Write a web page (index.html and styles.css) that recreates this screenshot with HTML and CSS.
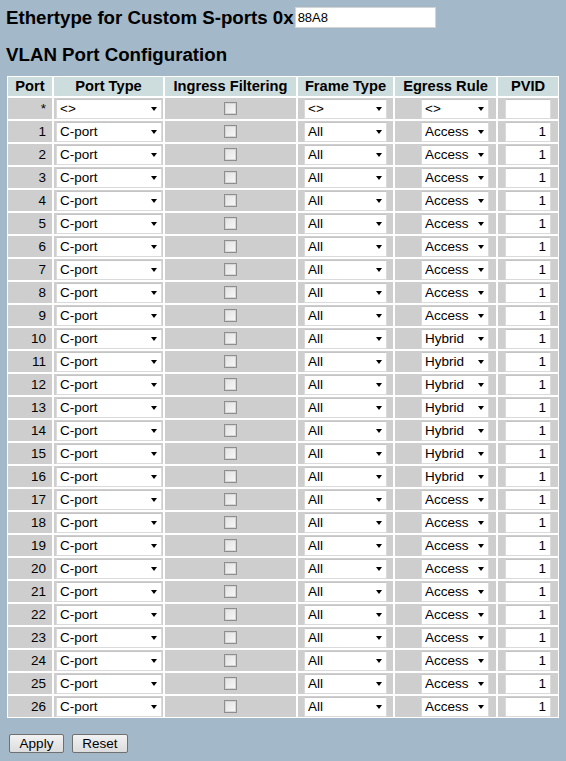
FILE: index.html
```html
<!DOCTYPE html>
<html>
<head>
<meta charset="utf-8">
<title>VLAN Port Configuration</title>
<link rel="stylesheet" href="styles.css">
</head>
<body>
<div class="ethertype">
  <h1 class="title">Ethertype for Custom S-ports 0x</h1>
  <input class="etype" type="text" value="88A8">
</div>
<h2 class="title title2">VLAN Port Configuration</h2>
<table class="config">
  <colgroup>
    <col class="c-port"><col class="c-type"><col class="c-ingress"><col class="c-frame"><col class="c-egress"><col class="c-pvid">
  </colgroup>
  <thead>
    <tr><th>Port</th><th>Port Type</th><th>Ingress Filtering</th><th>Frame Type</th><th>Egress Rule</th><th>PVID</th></tr>
  </thead>
  <tbody>
    <tr><td class="num">*</td><td class="t-type"><span class="sel w-type"><select><option>&lt;&gt;</option></select></span></td><td class="t-ing"><input type="checkbox" class="chk"></td><td class="t-frame"><span class="sel w-frame"><select><option>&lt;&gt;</option></select></span></td><td class="t-egress"><span class="sel w-egress"><select><option>&lt;&gt;</option></select></span></td><td class="t-pvid"><input class="pvid" type="text" value=""></td></tr>
    <tr><td class="num">1</td><td class="t-type"><span class="sel w-type"><select><option>C-port</option></select></span></td><td class="t-ing"><input type="checkbox" class="chk"></td><td class="t-frame"><span class="sel w-frame"><select><option>All</option></select></span></td><td class="t-egress"><span class="sel w-egress"><select><option>Access</option></select></span></td><td class="t-pvid"><input class="pvid" type="text" value="1"></td></tr>
    <tr><td class="num">2</td><td class="t-type"><span class="sel w-type"><select><option>C-port</option></select></span></td><td class="t-ing"><input type="checkbox" class="chk"></td><td class="t-frame"><span class="sel w-frame"><select><option>All</option></select></span></td><td class="t-egress"><span class="sel w-egress"><select><option>Access</option></select></span></td><td class="t-pvid"><input class="pvid" type="text" value="1"></td></tr>
    <tr><td class="num">3</td><td class="t-type"><span class="sel w-type"><select><option>C-port</option></select></span></td><td class="t-ing"><input type="checkbox" class="chk"></td><td class="t-frame"><span class="sel w-frame"><select><option>All</option></select></span></td><td class="t-egress"><span class="sel w-egress"><select><option>Access</option></select></span></td><td class="t-pvid"><input class="pvid" type="text" value="1"></td></tr>
    <tr><td class="num">4</td><td class="t-type"><span class="sel w-type"><select><option>C-port</option></select></span></td><td class="t-ing"><input type="checkbox" class="chk"></td><td class="t-frame"><span class="sel w-frame"><select><option>All</option></select></span></td><td class="t-egress"><span class="sel w-egress"><select><option>Access</option></select></span></td><td class="t-pvid"><input class="pvid" type="text" value="1"></td></tr>
    <tr><td class="num">5</td><td class="t-type"><span class="sel w-type"><select><option>C-port</option></select></span></td><td class="t-ing"><input type="checkbox" class="chk"></td><td class="t-frame"><span class="sel w-frame"><select><option>All</option></select></span></td><td class="t-egress"><span class="sel w-egress"><select><option>Access</option></select></span></td><td class="t-pvid"><input class="pvid" type="text" value="1"></td></tr>
    <tr><td class="num">6</td><td class="t-type"><span class="sel w-type"><select><option>C-port</option></select></span></td><td class="t-ing"><input type="checkbox" class="chk"></td><td class="t-frame"><span class="sel w-frame"><select><option>All</option></select></span></td><td class="t-egress"><span class="sel w-egress"><select><option>Access</option></select></span></td><td class="t-pvid"><input class="pvid" type="text" value="1"></td></tr>
    <tr><td class="num">7</td><td class="t-type"><span class="sel w-type"><select><option>C-port</option></select></span></td><td class="t-ing"><input type="checkbox" class="chk"></td><td class="t-frame"><span class="sel w-frame"><select><option>All</option></select></span></td><td class="t-egress"><span class="sel w-egress"><select><option>Access</option></select></span></td><td class="t-pvid"><input class="pvid" type="text" value="1"></td></tr>
    <tr><td class="num">8</td><td class="t-type"><span class="sel w-type"><select><option>C-port</option></select></span></td><td class="t-ing"><input type="checkbox" class="chk"></td><td class="t-frame"><span class="sel w-frame"><select><option>All</option></select></span></td><td class="t-egress"><span class="sel w-egress"><select><option>Access</option></select></span></td><td class="t-pvid"><input class="pvid" type="text" value="1"></td></tr>
    <tr><td class="num">9</td><td class="t-type"><span class="sel w-type"><select><option>C-port</option></select></span></td><td class="t-ing"><input type="checkbox" class="chk"></td><td class="t-frame"><span class="sel w-frame"><select><option>All</option></select></span></td><td class="t-egress"><span class="sel w-egress"><select><option>Access</option></select></span></td><td class="t-pvid"><input class="pvid" type="text" value="1"></td></tr>
    <tr><td class="num">10</td><td class="t-type"><span class="sel w-type"><select><option>C-port</option></select></span></td><td class="t-ing"><input type="checkbox" class="chk"></td><td class="t-frame"><span class="sel w-frame"><select><option>All</option></select></span></td><td class="t-egress"><span class="sel w-egress"><select><option>Hybrid</option></select></span></td><td class="t-pvid"><input class="pvid" type="text" value="1"></td></tr>
    <tr><td class="num">11</td><td class="t-type"><span class="sel w-type"><select><option>C-port</option></select></span></td><td class="t-ing"><input type="checkbox" class="chk"></td><td class="t-frame"><span class="sel w-frame"><select><option>All</option></select></span></td><td class="t-egress"><span class="sel w-egress"><select><option>Hybrid</option></select></span></td><td class="t-pvid"><input class="pvid" type="text" value="1"></td></tr>
    <tr><td class="num">12</td><td class="t-type"><span class="sel w-type"><select><option>C-port</option></select></span></td><td class="t-ing"><input type="checkbox" class="chk"></td><td class="t-frame"><span class="sel w-frame"><select><option>All</option></select></span></td><td class="t-egress"><span class="sel w-egress"><select><option>Hybrid</option></select></span></td><td class="t-pvid"><input class="pvid" type="text" value="1"></td></tr>
    <tr><td class="num">13</td><td class="t-type"><span class="sel w-type"><select><option>C-port</option></select></span></td><td class="t-ing"><input type="checkbox" class="chk"></td><td class="t-frame"><span class="sel w-frame"><select><option>All</option></select></span></td><td class="t-egress"><span class="sel w-egress"><select><option>Hybrid</option></select></span></td><td class="t-pvid"><input class="pvid" type="text" value="1"></td></tr>
    <tr><td class="num">14</td><td class="t-type"><span class="sel w-type"><select><option>C-port</option></select></span></td><td class="t-ing"><input type="checkbox" class="chk"></td><td class="t-frame"><span class="sel w-frame"><select><option>All</option></select></span></td><td class="t-egress"><span class="sel w-egress"><select><option>Hybrid</option></select></span></td><td class="t-pvid"><input class="pvid" type="text" value="1"></td></tr>
    <tr><td class="num">15</td><td class="t-type"><span class="sel w-type"><select><option>C-port</option></select></span></td><td class="t-ing"><input type="checkbox" class="chk"></td><td class="t-frame"><span class="sel w-frame"><select><option>All</option></select></span></td><td class="t-egress"><span class="sel w-egress"><select><option>Hybrid</option></select></span></td><td class="t-pvid"><input class="pvid" type="text" value="1"></td></tr>
    <tr><td class="num">16</td><td class="t-type"><span class="sel w-type"><select><option>C-port</option></select></span></td><td class="t-ing"><input type="checkbox" class="chk"></td><td class="t-frame"><span class="sel w-frame"><select><option>All</option></select></span></td><td class="t-egress"><span class="sel w-egress"><select><option>Hybrid</option></select></span></td><td class="t-pvid"><input class="pvid" type="text" value="1"></td></tr>
    <tr><td class="num">17</td><td class="t-type"><span class="sel w-type"><select><option>C-port</option></select></span></td><td class="t-ing"><input type="checkbox" class="chk"></td><td class="t-frame"><span class="sel w-frame"><select><option>All</option></select></span></td><td class="t-egress"><span class="sel w-egress"><select><option>Access</option></select></span></td><td class="t-pvid"><input class="pvid" type="text" value="1"></td></tr>
    <tr><td class="num">18</td><td class="t-type"><span class="sel w-type"><select><option>C-port</option></select></span></td><td class="t-ing"><input type="checkbox" class="chk"></td><td class="t-frame"><span class="sel w-frame"><select><option>All</option></select></span></td><td class="t-egress"><span class="sel w-egress"><select><option>Access</option></select></span></td><td class="t-pvid"><input class="pvid" type="text" value="1"></td></tr>
    <tr><td class="num">19</td><td class="t-type"><span class="sel w-type"><select><option>C-port</option></select></span></td><td class="t-ing"><input type="checkbox" class="chk"></td><td class="t-frame"><span class="sel w-frame"><select><option>All</option></select></span></td><td class="t-egress"><span class="sel w-egress"><select><option>Access</option></select></span></td><td class="t-pvid"><input class="pvid" type="text" value="1"></td></tr>
    <tr><td class="num">20</td><td class="t-type"><span class="sel w-type"><select><option>C-port</option></select></span></td><td class="t-ing"><input type="checkbox" class="chk"></td><td class="t-frame"><span class="sel w-frame"><select><option>All</option></select></span></td><td class="t-egress"><span class="sel w-egress"><select><option>Access</option></select></span></td><td class="t-pvid"><input class="pvid" type="text" value="1"></td></tr>
    <tr><td class="num">21</td><td class="t-type"><span class="sel w-type"><select><option>C-port</option></select></span></td><td class="t-ing"><input type="checkbox" class="chk"></td><td class="t-frame"><span class="sel w-frame"><select><option>All</option></select></span></td><td class="t-egress"><span class="sel w-egress"><select><option>Access</option></select></span></td><td class="t-pvid"><input class="pvid" type="text" value="1"></td></tr>
    <tr><td class="num">22</td><td class="t-type"><span class="sel w-type"><select><option>C-port</option></select></span></td><td class="t-ing"><input type="checkbox" class="chk"></td><td class="t-frame"><span class="sel w-frame"><select><option>All</option></select></span></td><td class="t-egress"><span class="sel w-egress"><select><option>Access</option></select></span></td><td class="t-pvid"><input class="pvid" type="text" value="1"></td></tr>
    <tr><td class="num">23</td><td class="t-type"><span class="sel w-type"><select><option>C-port</option></select></span></td><td class="t-ing"><input type="checkbox" class="chk"></td><td class="t-frame"><span class="sel w-frame"><select><option>All</option></select></span></td><td class="t-egress"><span class="sel w-egress"><select><option>Access</option></select></span></td><td class="t-pvid"><input class="pvid" type="text" value="1"></td></tr>
    <tr><td class="num">24</td><td class="t-type"><span class="sel w-type"><select><option>C-port</option></select></span></td><td class="t-ing"><input type="checkbox" class="chk"></td><td class="t-frame"><span class="sel w-frame"><select><option>All</option></select></span></td><td class="t-egress"><span class="sel w-egress"><select><option>Access</option></select></span></td><td class="t-pvid"><input class="pvid" type="text" value="1"></td></tr>
    <tr><td class="num">25</td><td class="t-type"><span class="sel w-type"><select><option>C-port</option></select></span></td><td class="t-ing"><input type="checkbox" class="chk"></td><td class="t-frame"><span class="sel w-frame"><select><option>All</option></select></span></td><td class="t-egress"><span class="sel w-egress"><select><option>Access</option></select></span></td><td class="t-pvid"><input class="pvid" type="text" value="1"></td></tr>
    <tr><td class="num">26</td><td class="t-type"><span class="sel w-type"><select><option>C-port</option></select></span></td><td class="t-ing"><input type="checkbox" class="chk"></td><td class="t-frame"><span class="sel w-frame"><select><option>All</option></select></span></td><td class="t-egress"><span class="sel w-egress"><select><option>Access</option></select></span></td><td class="t-pvid"><input class="pvid" type="text" value="1"></td></tr>
  </tbody>
</table>
<div class="buttons">
  <button class="btn btn-apply" type="button">Apply</button>
  <button class="btn btn-reset" type="button">Reset</button>
</div>
</body>
</html>
```
FILE: styles.css
```css
html, body {
  margin: 0;
  padding: 0;
}
body {
  background: #a3b8c8;
  font-family: "Liberation Sans", Arial, sans-serif;
  font-size: 13px;
  color: #000;
  padding: 7px 7px 0 7px;
}
.ethertype {
  display: flex;
  align-items: center;
  height: 21px;
}
.title {
  font-size: 18.7px;
  font-weight: bold;
  margin: 0 0 0 -1px;
  line-height: 21px;
}
.etype {
  margin-left: 1px;
  width: 141px;
  height: 21px;
  box-sizing: border-box;
  border: 1px solid #d4d4d4;
  background: #fff;
  font-family: "Liberation Sans", Arial, sans-serif;
  font-size: 13px;
  padding: 0 2px;
  color: #000;
  outline: none;
}
.title2 {
  margin: 16px 0 11px -1px;
}
.config {
  border-collapse: separate;
  border-spacing: 0;
  table-layout: fixed;
  width: 552px;
}
.c-port { width: 46px; }
.c-type { width: 111px; }
.c-ingress { width: 133px; }
.c-frame { width: 97px; }
.c-egress { width: 103px; }
.c-pvid { width: 62px; }
.config th,
.config td {
  border: 1px solid #fff;
  padding: 0;
  box-sizing: border-box;
  white-space: nowrap;
}
.config th {
  background: #cddcdc;
  font-size: 14.67px;
  font-weight: bold;
  height: 21px;
  line-height: 19px;
  text-align: center;
}
.config td {
  background: #cecece;
  height: 23px;
  line-height: 19px;
  vertical-align: middle;
}
.num {
  text-align: right;
  padding-right: 6px !important;
  font-size: 13.5px;
}
.t-type { padding-left: 2px !important; }
.t-frame { padding-left: 6px !important; }
.t-egress { padding-right: 7px !important; }
.t-pvid { padding-left: 7px !important; }

.sel {
  position: relative;
  display: block;
  height: 20px;
}
.t-egress .sel {
  margin-left: auto;
}
.sel select {
  display: block;
  -webkit-appearance: none;
  appearance: none;
  height: 20px;
  box-sizing: border-box;
  background: #fff;
  border: 1px solid #dadada;
  border-top-color: #c4c4c4;
  border-radius: 0;
  font-family: "Liberation Sans", Arial, sans-serif;
  font-size: 13.5px;
  color: #000;
  padding: 0 0 0 3px;
  margin: 0;
  width: 100%;
  outline: none;
}
.sel::after {
  content: "";
  position: absolute;
  right: 5px;
  top: 8px;
  width: 0;
  height: 0;
  border-left: 3.5px solid transparent;
  border-right: 3.5px solid transparent;
  border-top: 4px solid #000;
  pointer-events: none;
}
.w-type { width: 106px; }
.w-frame { width: 83px; }
.w-egress { width: 68px; }

.chk {
  display: block;
  -webkit-appearance: none;
  appearance: none;
  width: 13px;
  height: 13px;
  margin: 0 auto;
  box-sizing: border-box;
  border: 1px solid #8e8e8e;
  box-shadow: inset 0 0 0 1px #d6d6d6;
  background: linear-gradient(135deg, #e2e2e2, #f8f8f8);
}
.pvid {
  display: block;
  width: 46px;
  height: 20px;
  box-sizing: border-box;
  border: 1px solid #dadada;
  border-top-color: #c4c4c4;
  background: #fff;
  font-family: "Liberation Sans", Arial, sans-serif;
  font-size: 13.5px;
  text-align: right;
  padding: 0 4px 0 2px;
  margin: 0;
  outline: none;
}
.buttons {
  display: flex;
  gap: 8px;
  margin: 16px 0 0 2px;
}
.btn {
  height: 19px;
  box-sizing: border-box;
  padding: 0;
  border: 1px solid #707070;
  border-radius: 2px;
  background: linear-gradient(#f2f2f2, #dcdcdc);
  font-family: "Liberation Sans", Arial, sans-serif;
  font-size: 13.5px;
  color: #000;
  line-height: 17px;
}
.btn-apply { width: 55px; }
.btn-reset { width: 56px; }
```
